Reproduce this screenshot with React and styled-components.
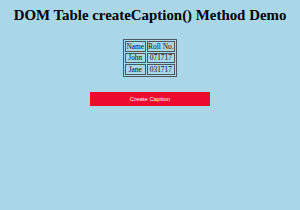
import React from "react";
import styled, { createGlobalStyle } from "styled-components";

const Global = createGlobalStyle`
  html, body {
    margin: 0;
    padding: 0;
    background: #a9d7e7;
  }
  body {
    width: 300px;
    height: 210px;
    overflow: hidden;
  }
`;

const Page = styled.div`
  display: flex;
  flex-direction: column;
  align-items: center;
  padding-top: 7.4px;
  font-family: "Liberation Serif", "Times New Roman", serif;
`;

const Title = styled.h1`
  margin: 0;
  font-size: 14.9px;
  line-height: 17px;
  font-weight: bold;
  color: #000;
  white-space: nowrap;
`;

const Table = styled.table`
  margin-top: 15px;
  border: 1px solid #4a5a60;
  border-spacing: 1px;
  font-size: 7.4px;
  line-height: 7.5px;
  color: #111;
`;

const Cell = styled.td`
  border: 1px solid #4a5a60;
  padding: 0.5px 0.5px;
  text-align: ${(p) => (p.$head ? "left" : "center")};
`;

const Button = styled.button`
  margin-top: 15px;
  width: 120px;
  height: 14px;
  border: none;
  background: #ec0a2e;
  color: #fff;
  font-family: "Liberation Sans", Arial, sans-serif;
  font-size: 6px;
  padding: 0;
`;

const rows = [
  ["John", "071717"],
  ["Jane", "031717"],
];

export default function App() {
  return (
    <>
      <Global />
      <Page>
        <Title>DOM Table createCaption() Method Demo</Title>
        <Table>
          <tbody>
            <tr>
              <Cell $head>Name</Cell>
              <Cell $head>Roll No.</Cell>
            </tr>
            {rows.map(([n, r]) => (
              <tr key={n}>
                <Cell>{n}</Cell>
                <Cell>{r}</Cell>
              </tr>
            ))}
          </tbody>
        </Table>
        <Button>Create Caption</Button>
      </Page>
    </>
  );
}
